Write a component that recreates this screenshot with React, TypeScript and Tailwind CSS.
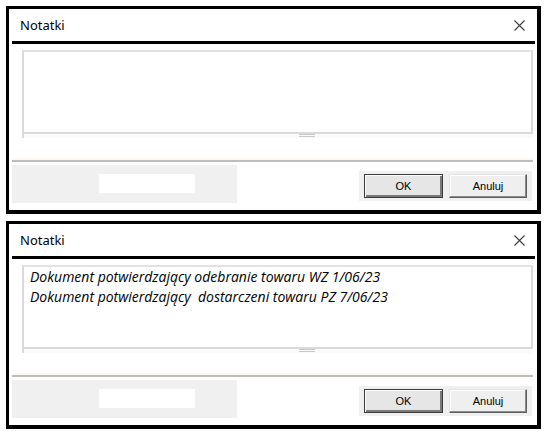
import React from 'react';

function CloseIcon() {
  return (
    <svg width="11" height="11" viewBox="0 0 11 11" className="block">
      <path d="M0.5 0.5 L10.5 10.5 M10.5 0.5 L0.5 10.5" stroke="#3c3c3c" strokeWidth="1.1" fill="none" />
    </svg>
  );
}

function NotesWindow({ lines }: { lines?: string[] }) {
  return (
    <div className="w-[535px] h-[208px] bg-white border-black border-l-[3px] border-t-[3px] border-r-4 border-b-4 flex flex-col">
      {/* title bar */}
      <div className="h-[32px] flex items-center justify-between pl-[11px] pr-[12px]">
        <span className="font-['Noto_Sans',sans-serif] text-[13px] text-black leading-none">Notatki</span>
        <CloseIcon />
      </div>
      <div className="ml-[3px] mr-[2px] h-[3px] bg-black" />

      {/* notes box */}
      <div className="ml-[13px] mr-[4px] mt-[6px] h-[84px] bg-white border-2 border-[#dadada] border-t-[#e2e2e2] pl-[6px] overflow-hidden">
        {lines?.map((l, i) => (
          <div key={i} className="font-['Open_Sans',sans-serif] italic text-[14px] leading-[20px] text-black whitespace-pre">
            {l}
          </div>
        ))}
      </div>
      <div className="ml-[13px] mr-[4px] h-[4px] border-l-2 border-[#dadada] bg-[#fafafa] pl-[275px]">
        <div className="w-[16px] flex flex-col gap-[1px]">
          <div className="h-px bg-[#c8c8c8]" />
          <div className="h-px bg-[#c8c8c8]" />
        </div>
      </div>

      {/* divider */}
      <div className="ml-[3px] mr-[4px] mt-[20px] h-[2px] bg-[#fdf9ee]" />
      <div className="ml-[3px] mr-[4px] h-[2px] bg-[#bdbdbd]" />

      {/* bottom panel */}
      <div className="flex items-start mt-[3px]">
        <div className="ml-[3px] w-[225px] h-[38px] bg-[#f0f0f0] pt-[9px] pl-[87px]">
          <div className="w-[96px] h-[19px] bg-white" />
        </div>
        <div className="ml-auto mr-[5px] mt-[6px] w-[173px] h-[30px] bg-[#f0f0f0] flex items-start gap-[6px] pl-[5px] pt-[3px]">
          <button className="w-[79px] h-[24px] bg-[#e6e6e6] border border-[#3a3a3a] shadow-[inset_1px_1px_0_#ffffff,inset_-2px_-2px_0_#7a7a7a] font-['Liberation_Sans',sans-serif] text-[11px] text-black flex items-center justify-center">
            OK
          </button>
          <button className="w-[78px] h-[24px] bg-[#efefef] border border-[#e4e4e4] border-r-[#5f5f5f] border-b-[#5f5f5f] shadow-[inset_-1px_-1px_0_#8a8a8a,inset_1px_1px_0_#ffffff] font-['Liberation_Sans',sans-serif] text-[11px] text-black flex items-center justify-center">
            Anuluj
          </button>
        </div>
      </div>
    </div>
  );
}

export default function App() {
  return (
    <div className="w-[550px] h-[437px] bg-white pl-[6px] pt-[6px] flex flex-col gap-[7px]">
      <NotesWindow />
      <NotesWindow
        lines={[
          'Dokument potwierdzający odebranie towaru WZ 1/06/23',
          'Dokument potwierdzający  dostarczeni towaru PZ 7/06/23',
        ]}
      />
    </div>
  );
}
